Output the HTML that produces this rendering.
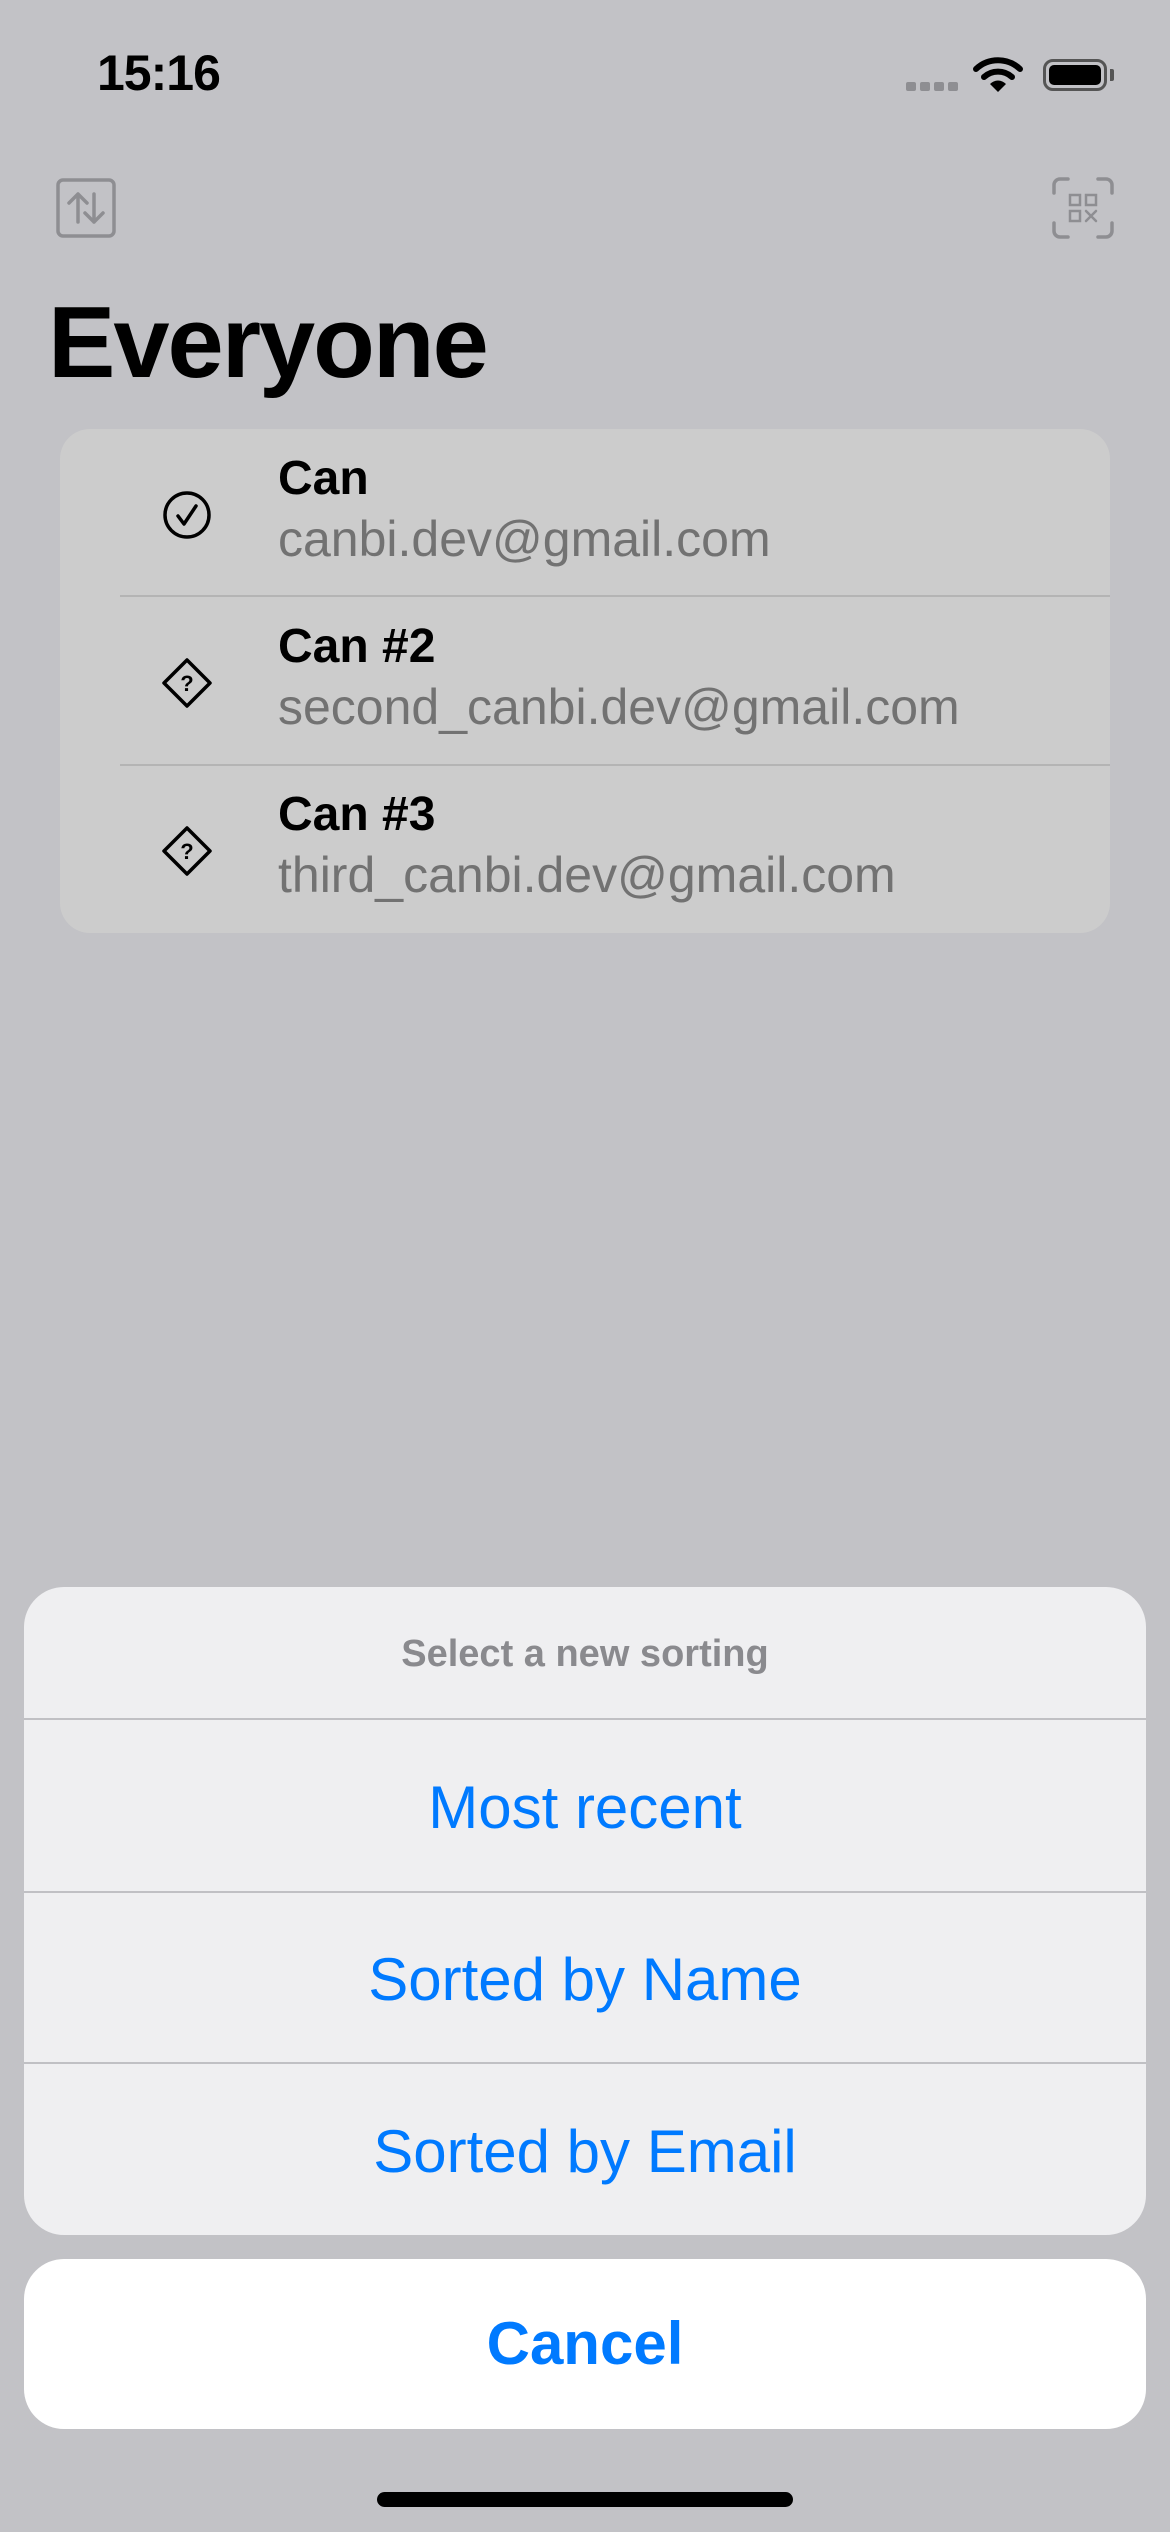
<!DOCTYPE html>
<html><head><meta charset="utf-8"><style>
*{margin:0;padding:0;box-sizing:border-box}
body{width:1170px;height:2532px;background:#c2c2c6;font-family:"Liberation Sans",sans-serif;position:relative;overflow:hidden}
.a{position:absolute}
.time{left:97px;top:44px;font-size:50px;font-weight:bold;color:#000;letter-spacing:-1px}
.title{left:48px;top:286px;font-size:101px;font-weight:bold;color:#000;letter-spacing:-2px}
.card{left:60px;top:429px;width:1050px;height:504px;background:#cccccc;border-radius:30px}
.sep{position:absolute;left:60px;right:0;height:2px;background:#b4b4b4}
.name{position:absolute;left:218px;font-size:48px;font-weight:bold;color:#000}
.mail{position:absolute;left:218px;font-size:50px;color:#727272}
.ic{position:absolute;left:102px;width:50px;height:50px}
.sheet{left:24px;top:1587px;width:1122px;height:648px;background:#efeff1;border-radius:40px;overflow:hidden}
.ss{position:absolute;left:0;right:0;height:2px;background:#c0c0c4}
.btn{position:absolute;left:0;right:0;text-align:center;font-size:60px;color:#007aff}
.cancel{left:24px;top:2259px;width:1122px;height:170px;background:#fff;border-radius:40px;text-align:center;font-size:60px;font-weight:bold;color:#007aff;line-height:170px}
</style></head><body>
<div class="a time">15:16</div>
<div class="a" style="left:906px;top:82px;display:flex;gap:4px">
<div style="width:10px;height:9px;background:#8e8e92;border-radius:2px"></div><div style="width:10px;height:9px;background:#8e8e92;border-radius:2px"></div><div style="width:10px;height:9px;background:#8e8e92;border-radius:2px"></div><div style="width:10px;height:9px;background:#8e8e92;border-radius:2px"></div></div>
<svg class="a" style="left:973px;top:56px" width="50" height="38" viewBox="0 0 50 38"><path d="M3 13 A32 32 0 0 1 47 13" stroke="#000" stroke-width="6" fill="none" stroke-linecap="round"/><path d="M11 21 A21 21 0 0 1 39 21" stroke="#000" stroke-width="6" fill="none" stroke-linecap="round"/><path d="M17 28 L25 36 L33 28 A11 11 0 0 0 17 28Z" fill="#000"/></svg>
<div class="a" style="left:1043px;top:59px;width:64px;height:32px;border:3px solid #555;border-radius:10px;padding:3px"><div style="width:100%;height:100%;background:#000;border-radius:5px"></div></div>
<div class="a" style="left:1110px;top:69px;width:4px;height:12px;background:#555;border-radius:0 2px 2px 0"></div>
<svg class="a" style="left:56px;top:178px" width="60" height="60" viewBox="0 0 60 60" fill="none" stroke="#8e8e92" stroke-width="3.5" stroke-linecap="round" stroke-linejoin="round"><rect x="2" y="2" width="56" height="56" rx="5"/><path d="M22 44V16M13 25l9-9 9 9M38 16v28M29 35l9 9 9-9"/></svg>
<svg class="a" style="left:1052px;top:177px" width="62" height="62" viewBox="0 0 62 62" fill="none" stroke="#8e8e92" stroke-width="3.5" stroke-linecap="round"><path d="M2 16V8a6 6 0 0 1 6-6h8M46 2h8a6 6 0 0 1 6 6v8M60 46v8a6 6 0 0 1-6 6h-8M16 60H8a6 6 0 0 1-6-6v-8"/><rect x="18" y="18" width="10" height="10" stroke-width="2.5"/><rect x="34" y="18" width="10" height="10" stroke-width="2.5"/><rect x="18" y="34" width="10" height="10" stroke-width="2.5"/><path d="M34 34l10 10M44 34l-10 10" stroke-width="2.5"/></svg>
<div class="a title">Everyone</div>
<div class="a card">
<svg class="ic" style="top:61px" viewBox="0 0 50 50" fill="none" stroke="#000" stroke-width="3.5" stroke-linecap="round" stroke-linejoin="round"><circle cx="25" cy="25" r="22"/><path d="M16 26l6 8 12-18"/></svg>
<div class="name" style="top:22px">Can</div>
<div class="mail" style="top:81px">canbi.dev@gmail.com</div>
<div class="sep" style="top:166px"></div>
<svg class="ic" style="top:229px" viewBox="0 0 50 50" fill="none" stroke="#000" stroke-width="3.5" stroke-linejoin="round"><path d="M25 2L48 25 25 48 2 25Z"/><text x="25" y="33" text-anchor="middle" font-family="Liberation Sans" font-size="22" font-weight="bold" fill="#000" stroke="none">?</text></svg>
<div class="name" style="top:190px">Can #2</div>
<div class="mail" style="top:249px">second_canbi.dev@gmail.com</div>
<div class="sep" style="top:335px"></div>
<svg class="ic" style="top:397px" viewBox="0 0 50 50" fill="none" stroke="#000" stroke-width="3.5" stroke-linejoin="round"><path d="M25 2L48 25 25 48 2 25Z"/><text x="25" y="33" text-anchor="middle" font-family="Liberation Sans" font-size="22" font-weight="bold" fill="#000" stroke="none">?</text></svg>
<div class="name" style="top:358px">Can #3</div>
<div class="mail" style="top:417px">third_canbi.dev@gmail.com</div>
</div>
<div class="a sheet">
<div class="btn" style="top:46px;font-size:38px;font-weight:bold;color:#8a8a8e">Select a new sorting</div>
<div class="ss" style="top:131px"></div>
<div class="btn" style="top:186px">Most recent</div>
<div class="ss" style="top:304px"></div>
<div class="btn" style="top:358px">Sorted by Name</div>
<div class="ss" style="top:475px"></div>
<div class="btn" style="top:530px">Sorted by Email</div>
</div>
<div class="a cancel">Cancel</div>
<div class="a" style="left:377px;top:2492px;width:416px;height:15px;background:#000;border-radius:8px"></div>
</body></html>
